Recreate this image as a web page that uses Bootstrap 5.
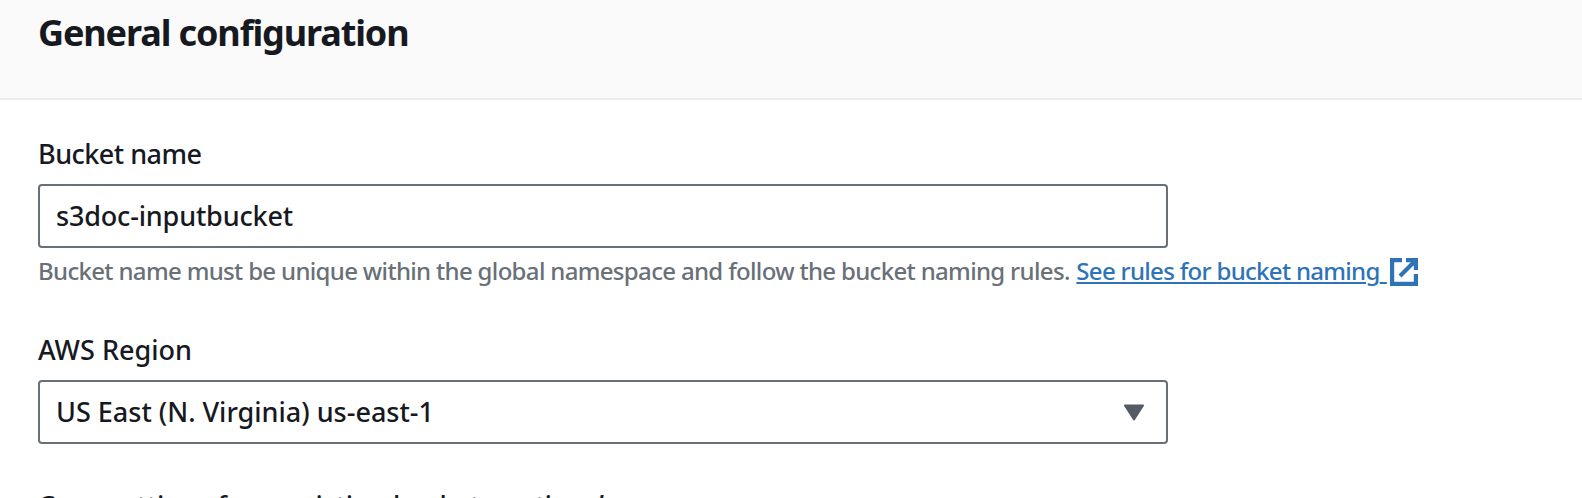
<!DOCTYPE html>
<html lang="en">
<head>
<meta charset="utf-8">
<meta name="viewport" content="width=device-width, initial-scale=1">
<title>Create bucket</title>
<link href="https://cdn.jsdelivr.net/npm/bootstrap@5.3.0/dist/css/bootstrap.min.css" rel="stylesheet">
<style>
  html, body { overflow: hidden; height: 100%; }
  body { font-family: "Noto Sans", sans-serif; font-weight: 500; font-size: 27px; color: #16191f; background: #fff; }
  .page { height: 498px; }
  .panel-head { height: 100px; background: #fafafa; border-bottom: 2px solid #eaeded; padding: 13px 38px 0; }
  .panel-head h2 { font-size: 36px; line-height: 40px; font-weight: 700; letter-spacing: -1.12px; }
  .panel-body { padding: 34px 38px 0; }
  .field { height: 196px; white-space: nowrap; }
  .field.short { height: 156px; }
  .form-label { display: block; line-height: 40px; margin-bottom: 10px; letter-spacing: -.52px; }
  .form-label.region { letter-spacing: 0; }
  .form-control, .select-box { width: 1130px; height: 64px; border: 2px solid #687078; border-radius: 4px; padding: 0 16px; font-size: 27px; font-weight: 500; color: #16191f; letter-spacing: 0; }
  .form-control { padding-bottom: 2px; letter-spacing: -.17px; }
  .select-box { padding-right: 22px; }
  .hint { font-size: 24px; line-height: 32px; margin-top: 7px; color: #687078; letter-spacing: -.67px; }
  .hint a { color: #2e73b8; margin-left: 1px; letter-spacing: -.7px; text-decoration-thickness: 1.5px; text-underline-offset: 2px; }
  .hint a span { letter-spacing: 1px; }
  .ext { width: 28px; height: 28px; margin-left: 3px; vertical-align: -6px; }
  .copy-title { line-height: 40px; letter-spacing: -.16px; white-space: nowrap; }
</style>
</head>
<body>
<div class="page overflow-hidden">
  <header class="panel-head"><h2 class="m-0">General configuration</h2></header>
  <main class="panel-body">
    <div class="field">
      <label class="form-label" for="bucket">Bucket name</label>
      <input class="form-control" id="bucket" type="text" value="s3doc-inputbucket">
      <div class="hint">Bucket name must be unique within the global namespace and follow the bucket naming rules. <a href="#">See rules for bucket naming<span>&nbsp;</span></a><svg class="ext" viewBox="0 0 28 28" fill="none" stroke="#2e73b8" stroke-width="4.2"><path d="M12 2.1H2.1v23.8h23.8V16"/><path d="M16 2.1h9.9V12M25.5 2.5L10 18"/></svg></div>
    </div>
    <div class="field short">
      <label class="form-label region">AWS Region</label>
      <div class="select-box d-flex align-items-center justify-content-between" role="combobox">
        <span>US East (N. Virginia) us-east-1</span>
        <svg width="20" height="17" viewBox="0 0 20 17"><path d="M1 1.5h18L10 15.5z" fill="#545b64" stroke="#545b64" stroke-width="2" stroke-linejoin="round"/></svg>
      </div>
    </div>
    <div class="copy-title">Copy settings from existing bucket - <i>optional</i></div>
  </main>
</div>
<script src="https://cdn.jsdelivr.net/npm/bootstrap@5.3.0/dist/js/bootstrap.bundle.min.js"></script>
</body>
</html>
